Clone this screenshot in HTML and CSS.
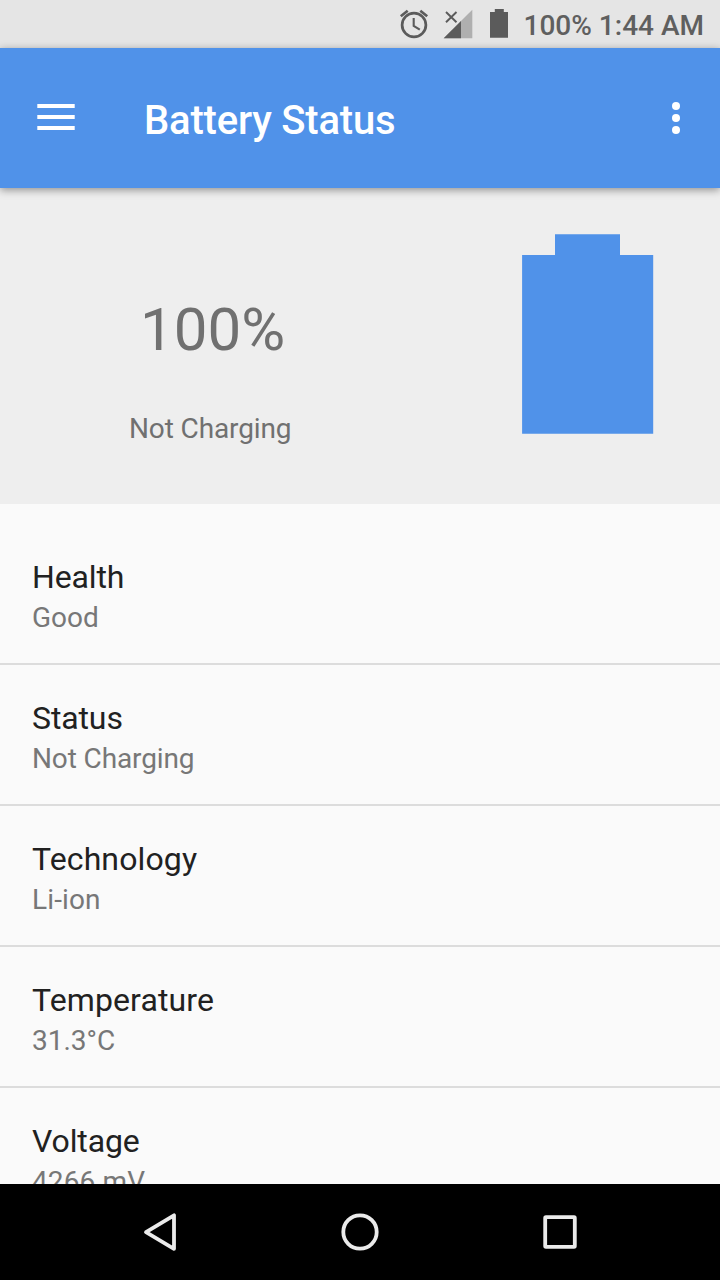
FILE: index.html
```html
<!DOCTYPE html>
<html lang="en">
<head>
<meta charset="utf-8">
<title>Battery Status</title>
<link rel="stylesheet" href="styles.css">
</head>
<body>
<div class="screen">
  <header class="status-bar">
    <svg class="status-icons" width="120" height="48" viewBox="0 0 120 48" aria-hidden="true">
      <g fill="none" stroke="#5b5b5b" stroke-width="2.7">
        <circle cx="24" cy="25" r="11.9"/>
        <path d="M10.800 16.200l6.900-5.500M37.200 16.200l-6.900-5.500"/>
        <path d="M23.700 18v8l6.100 3.700" stroke-width="2.1"/>
        <path d="M56 12l10.500 10.300M66.500 12L56 22.300" stroke-width="1.9"/>
      </g>
      <path d="M53.700 38.300L82.300 9.700v28.600z" fill="#afafaf"/>
      <path d="M53.700 38.300L71 21v17.300z" fill="#5b5b5b"/>
      <path d="M104.800 9h9v3h4.200v25.700h-18V12h4.800z" fill="#5b5b5b"/>
    </svg>
    <span class="battery-level">100%</span>
    <span class="clock">1:44 AM</span>
  </header>

  <div class="app-bar">
    <svg class="menu-icon" width="38" height="26" viewBox="0 0 38 26" fill="#fff" aria-label="Menu">
      <path d="M.3 0h37.400v4H.3zM.3 11h37.400v4H.3zM.3 22h37.400v4H.3z"/>
    </svg>
    <h1 class="app-title">Battery Status</h1>
    <svg class="more-icon" width="8" height="32" viewBox="0 0 8 32" fill="#fff" aria-label="More options">
      <circle cx="4" cy="4" r="4"/><circle cx="4" cy="16" r="4"/><circle cx="4" cy="28" r="4"/>
    </svg>
  </div>

  <section class="summary">
    <div class="charge">
      <div class="charge-percent">100%</div>
      <div class="charge-state tight">Not Charging</div>
    </div>
    <svg class="battery" width="132" height="200" viewBox="0 0 132 200" aria-hidden="true">
      <path d="M33 .2h65v20.800h33.200v178.700H.1V21H33z" fill="#5092e9"/>
    </svg>
  </section>

  <main class="details">
    <div class="row"><div class="row-title tight">Health</div><div class="row-value">Good</div></div>
    <div class="row"><div class="row-title tight">Status</div><div class="row-value tight">Not Charging</div></div>
    <div class="row"><div class="row-title loose">Technology</div><div class="row-value loose">Li-ion</div></div>
    <div class="row"><div class="row-title loose">Temperature</div><div class="row-value">31.3°C</div></div>
    <div class="row"><div class="row-title tight">Voltage</div><div class="row-value loose">4266 mV</div></div>
  </main>

  <nav class="nav-bar">
    <svg width="40" height="40" viewBox="0 0 40 40" aria-label="Back"><path d="M34 3.300v33.500L6 20.200z"/></svg>
    <svg width="40" height="40" viewBox="0 0 40 40" aria-label="Home"><circle cx="20" cy="20" r="16.700"/></svg>
    <svg width="40" height="40" viewBox="0 0 40 40" aria-label="Recent apps"><rect x="5.200" y="5.200" width="29.600" height="29.600" rx=".8"/></svg>
  </nav>
</div>
</body>
</html>
```
FILE: styles.css
```css
* {
  box-sizing: border-box;
}

body {
  margin: 0;
  font-family: Roboto, sans-serif;
}

.screen {
  display: flex;
  flex-direction: column;
  width: 720px;
  height: 1280px;
  overflow: hidden;
  background: #fafafa;
}

.tight {
  letter-spacing: -0.12px;
}

.loose {
  letter-spacing: 0.12px;
}

.status-bar {
  display: flex;
  flex: 0 0 48px;
  align-items: flex-start;
  justify-content: flex-end;
  padding-right: 16px;
  background: #e5e5e5;
  color: #5f5f5f;
  font-size: 28px;
  font-weight: 500;
  line-height: 44px;
  white-space: nowrap;
}

.status-icons {
  margin-right: 14px;
}

.battery-level,
.clock {
  margin-top: 4px;
}

.clock {
  margin-left: 7px;
}

.app-bar {
  display: flex;
  flex: 0 0 140px;
  align-items: flex-start;
  position: relative;
  padding: 54px 40px 0 37px;
  background: #5092e9;
  box-shadow: 0 2px 8px rgba(0, 0, 0, 0.4);
}

.menu-icon {
  margin-top: 2px;
}

.app-title {
  flex: 1;
  margin: -5px 0 0 69px;
  color: #fff;
  font-size: 40px;
  font-weight: 500;
  letter-spacing: -0.2px;
  line-height: 48px;
}

.summary {
  display: flex;
  flex: 0 0 316px;
  justify-content: space-between;
  padding: 46px 66px 0 129px;
  background: #eee;
}

.charge {
  color: #707070;
}

.charge-percent {
  margin-top: 61px;
  padding-left: 11px;
  font-size: 60px;
  line-height: 70px;
}

.charge-state {
  margin-top: 47px;
  font-size: 28px;
  line-height: 33px;
}

.details {
  flex: 1;
  min-height: 0;
  padding-top: 20px;
  overflow: hidden;
}

.row {
  height: 141px;
  padding: 34px 32px 0;
  border-bottom: 2px solid #dcdcdc;
}

.row-title {
  color: #212121;
  font-size: 32px;
  line-height: 38px;
}

.row-value {
  margin-top: 5px;
  color: #777;
  font-size: 28px;
  line-height: 33px;
}

.nav-bar {
  display: flex;
  flex: 0 0 96px;
  align-items: center;
  justify-content: space-between;
  padding: 0 140px;
  background: #000;
}

.nav-bar svg {
  fill: none;
  stroke: #ebebeb;
  stroke-width: 3.8;
  stroke-linejoin: round;
}
```
